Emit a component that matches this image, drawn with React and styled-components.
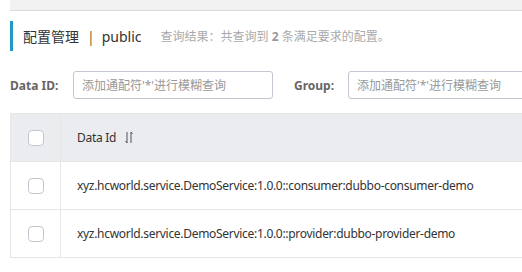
import React from "react";
import styled, { createGlobalStyle } from "styled-components";

const GlobalStyle = createGlobalStyle`
  body {
    margin: 0;
    background: #fff;
    font-family: "Noto Sans", "Noto Sans CJK SC", sans-serif;
    color: #333;
    overflow: hidden;
  }
`;

const rows = [
  "xyz.hcworld.service.DemoService:1.0.0::consumer:dubbo-consumer-demo",
  "xyz.hcworld.service.DemoService:1.0.0::provider:dubbo-provider-demo",
];

function SortArrows() {
  return (
    <SortSvg width="8" height="13" viewBox="0 0 8 13">
      <path d="M2 1 V12 L0.5 10" fill="none" stroke="#555" strokeWidth="1" />
      <path d="M6 12 V1 L7.5 3" fill="none" stroke="#555" strokeWidth="1" />
    </SortSvg>
  );
}

export default function App() {
  return (
    <Page>
      <GlobalStyle />
      <TopStrip />
      <TitleRow>
        <Title>
          配置管理<Sep>|</Sep>public
        </Title>
        <Summary>
          查询结果：共查询到 <b>2</b> 条满足要求的配置。
        </Summary>
      </TitleRow>
      <SearchRow>
        <Label $w={63}>Data ID:</Label>
        <Input placeholder="添加通配符'*'进行模糊查询" />
        <Label $w={54} $gap={21}>
          Group:
        </Label>
        <Input placeholder="添加通配符'*'进行模糊查询" />
      </SearchRow>
      <Table>
        <HeadRow>
          <CheckCell>
            <Check />
          </CheckCell>
          <Cell>
            Data Id <SortArrows />
          </Cell>
        </HeadRow>
        {rows.map((r) => (
          <Row key={r}>
            <CheckCell>
              <Check />
            </CheckCell>
            <Cell>{r}</Cell>
          </Row>
        ))}
      </Table>
    </Page>
  );
}

const Page = styled.div`
  width: 600px;
  padding-left: 10px;
`;

const TopStrip = styled.div`
  height: 10px;
  background: #f2f2f2;
  border-bottom: 1px solid #dcdcdc;
`;

const TitleRow = styled.div`
  margin-top: 10px;
  height: 30px;
  border-left: 3px solid #1f9ac4;
  padding-left: 10px;
  display: flex;
  align-items: center;
`;

const Title = styled.span`
  font-size: 14px;
  color: #333;
  white-space: nowrap;
`;

const Sep = styled.span`
  margin: 0 7px 0 8px;
  color: #7a6a2a;
`;

const Summary = styled.span`
  margin-left: 19px;
  font-size: 12px;
  color: #aaa;
  white-space: nowrap;
  b {
    color: #999;
  }
`;

const SearchRow = styled.div`
  margin-top: 20px;
  display: flex;
  align-items: center;
  height: 28px;
`;

const Label = styled.label`
  width: ${(p) => p.$w}px;
  margin-left: ${(p) => p.$gap || 0}px;
  font-size: 12px;
  font-weight: bold;
  color: #666;
  white-space: nowrap;
`;

const Input = styled.input`
  width: 200px;
  height: 28px;
  box-sizing: border-box;
  border: 1px solid #c4c6cf;
  border-radius: 3px;
  padding: 0 8px;
  font-family: inherit;
  font-size: 12px;
  &::placeholder {
    color: #999;
  }
`;

const Table = styled.div`
  margin-top: 14px;
  border-left: 1px solid #e6e6e6;
  border-top: 1px solid #e6e6e6;
`;

const Row = styled.div`
  display: flex;
  height: 48px;
  border-bottom: 1px solid #e6e6e6;
  box-sizing: border-box;
  font-size: 12px;
  color: #333;
`;

const HeadRow = styled(Row)`
  background: #ebecf0;
`;

const CheckCell = styled.div`
  width: 50px;
  border-right: 1px solid #e6e6e6;
  box-sizing: border-box;
  display: flex;
  align-items: center;
  justify-content: center;
`;

const Check = styled.span`
  width: 16px;
  height: 16px;
  box-sizing: border-box;
  border: 1px solid #c4c6cf;
  border-radius: 4px;
  background: #fff;
`;

const Cell = styled.div`
  display: flex;
  align-items: center;
  padding-left: 16px;
  white-space: nowrap;
  letter-spacing: -0.3px;
`;

const SortSvg = styled.svg`
  margin-left: 9px;
`;
